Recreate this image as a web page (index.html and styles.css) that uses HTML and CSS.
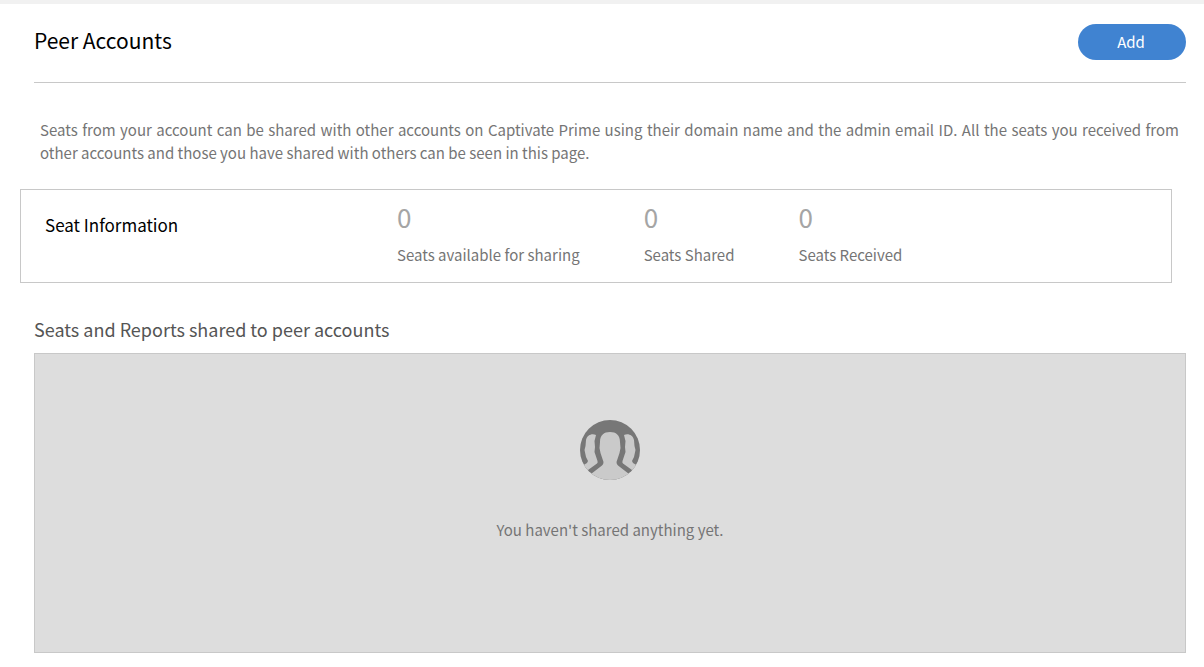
FILE: index.html
```html
<!DOCTYPE html>
<html lang="en">
<head>
<meta charset="utf-8">
<meta name="viewport" content="width=device-width, initial-scale=1">
<title>Peer Accounts</title>
<link rel="stylesheet" href="styles.css">
</head>
<body>
<main class="page">
  <header class="page-header">
    <h1 class="page-title">Peer Accounts</h1>
    <button class="add-button" type="button">Add</button>
  </header>
  <p class="intro">Seats from your account can be shared with other accounts on Captivate Prime using their domain name and the admin email ID. All the seats you received from other accounts and those you have shared with others can be seen in this page.</p>
  <section class="seat-info">
    <h2 class="seat-title">Seat Information</h2>
    <dl class="stats">
      <div class="stat"><dt class="stat-label">Seats available for sharing</dt><dd class="stat-value">0</dd></div>
      <div class="stat"><dt class="stat-label">Seats Shared</dt><dd class="stat-value">0</dd></div>
      <div class="stat"><dt class="stat-label">Seats Received</dt><dd class="stat-value">0</dd></div>
    </dl>
  </section>
  <section class="shared">
    <h2 class="shared-title">Seats and Reports shared to peer accounts</h2>
    <div class="empty">
      <svg class="empty-icon" viewBox="0 0 60 60" aria-hidden="true">
        <defs><clipPath id="disc"><circle cx="30" cy="30" r="30"/></clipPath></defs>
        <g clip-path="url(#disc)">
          <rect width="60" height="60" fill="#777"/>
          <g fill="#cacaca">
            <path d="M16 15C12 13 7 15 6 20L5.500 26L4.500 30L6 37L8 41L7 43L2 46V54L8 50L17 43.500Q18 42.500 17.500 41L14.500 32L15 27L14.500 21Z"/>
            <path d="M44 15C48 13 53 15 54 20L54.500 26L55.500 30L54 37L52 41L53 43L58 46V54L52 50L43 43.500Q42 42.500 42.500 41L45.500 32L45 27L45.500 21Z"/>
            <path d="M20 22C20 15 24 12 30 12C36 12 40 15 40 22L40.500 28L39.500 33L36.500 42Q36.500 44.500 38 45.500L49 54L46 62H14L11 54L22 45.500Q23.500 44.500 23.500 42L20.500 33L19.500 28Z"/>
          </g>
        </g>
      </svg>
      <p class="empty-text">You haven't shared anything yet.</p>
    </div>
  </section>
</main>
</body>
</html>
```
FILE: styles.css
```css
* {
  box-sizing: border-box;
}

body {
  margin: 0;
  border-top: 4px solid #f1f1f1;
  background: #fff;
  color: #757575;
  font-family: "Noto Sans CJK SC", "Noto Sans", sans-serif;
  font-size: 15px;
  line-height: 23px;
}

h1, h2, p, dl, dd {
  margin: 0;
  font-weight: 400;
}

.page {
  padding: 0 18px 14px 34px;
}

.page-header {
  display: flex;
  align-items: flex-start;
  justify-content: space-between;
  padding: 20px 0 22px;
  border-bottom: 1px solid #c8c8c8;
}

.page-title {
  color: #000;
  font-size: 21px;
  line-height: 32px;
}

.add-button {
  width: 108px;
  height: 36px;
  padding: 0 2px 2px 0;
  border: 0;
  border-radius: 18px;
  background: #4083d1;
  color: #fff;
  font: inherit;
}

.intro {
  padding: 35px 7px 25px 6px;
  text-align: justify;
}

.seat-info {
  display: flex;
  align-items: flex-start;
  margin: 0 14px 0 -14px;
  padding: 11px 24px 16px;
  border: 1px solid #c8c8c8;
}

.seat-title {
  flex: 0 0 352px;
  padding-top: 12px;
  color: #000;
  font-size: 17px;
  line-height: 24px;
}

.stats {
  display: flex;
  gap: 64px;
}

.stat {
  display: flex;
  flex-direction: column-reverse;
  gap: 10px;
}

.stat-value {
  color: #a5a5a5;
  font-size: 26px;
  line-height: 32px;
}

.shared {
  padding-top: 34px;
}

.shared-title {
  margin-bottom: 12px;
  color: #555;
  font-size: 18px;
  line-height: 24px;
}

.empty {
  display: flex;
  flex-direction: column;
  align-items: center;
  gap: 38px;
  min-height: 300px;
  padding-top: 66px;
  border: 1px solid #c8c8c8;
  background: #ddd;
}

.empty-icon {
  width: 60px;
  height: 60px;
}
```
